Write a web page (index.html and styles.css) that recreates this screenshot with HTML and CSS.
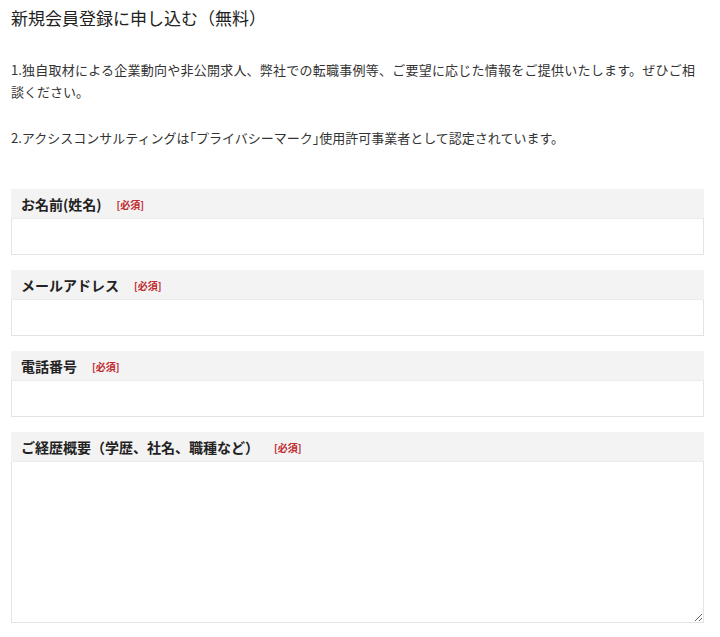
FILE: index.html
```html
<!DOCTYPE html>
<html lang="ja">
<head>
<meta charset="utf-8">
<title>新規会員登録</title>
<link rel="stylesheet" href="styles.css">
</head>
<body>
<div class="page">
  <h1 class="title">新規会員登録に申し込む（無料）</h1>
  <div class="intro">
    <p class="para">1.独自取材による企業動向や非公開求人、弊社での転職事例等、ご要望に応じた情報をご提供いたします。ぜひご相談ください。</p>
    <p class="para">2.アクシスコンサルティングは<span class="br">「</span>プライバシーマーク<span class="br">」</span>使用許可事業者として認定されています。</p>
  </div>
  <form class="form">
    <div class="field">
      <div class="label">お名前(姓名)<span class="req">[必須]</span></div>
      <input class="input" type="text">
    </div>
    <div class="field">
      <div class="label">メールアドレス<span class="req">[必須]</span></div>
      <input class="input" type="text">
    </div>
    <div class="field">
      <div class="label">電話番号<span class="req">[必須]</span></div>
      <input class="input" type="text">
    </div>
    <div class="field">
      <div class="label">ご経歴概要（学歴、社名、職種など）<span class="req">[必須]</span></div>
      <textarea class="textarea"></textarea>
    </div>
  </form>
</div>
</body>
</html>
```
FILE: styles.css
```css
html, body {
  margin: 0;
  padding: 0;
  background: #fff;
}
body {
  font-family: "Noto Sans CJK JP", "Noto Sans", sans-serif;
  color: #333;
}
.page {
  width: 693px;
  padding: 6px 0 0 11px;
}
.title {
  margin: 0;
  font-size: 17px;
  font-weight: normal;
  line-height: 24px;
  color: #222;
}
.intro {
  margin-top: 29px;
  padding-right: 9px;
}
.para {
  margin: 0 0 24px;
  font-size: 13px;
  line-height: 22px;
  text-align: justify;
  color: #333;
}
.br {
  font-feature-settings: "halt";
}
.form {
  margin-top: 40px;
  display: flex;
  flex-direction: column;
  gap: 15px;
}
.field {
  display: flex;
  flex-direction: column;
}
.label {
  height: 30px;
  box-sizing: border-box;
  background: #f3f3f3;
  padding: 0 0 0 10px;
  font-size: 14px;
  font-weight: bold;
  line-height: 30px;
  color: #222;
  border-bottom: 1px solid #ececec;
}
.req {
  margin-left: 15px;
  font-size: 10px;
  font-weight: bold;
  color: #c0282d;
  vertical-align: 1px;
}
.input, .textarea {
  display: block;
  box-sizing: border-box;
  width: 100%;
  margin: 0;
  border: 1px solid #e3e3e3;
  border-top: none;
  background: #fff;
  font-family: inherit;
  font-size: 14px;
  outline: none;
}
.input {
  height: 36px;
}
.textarea {
  height: 161px;
  resize: vertical;
}
```
